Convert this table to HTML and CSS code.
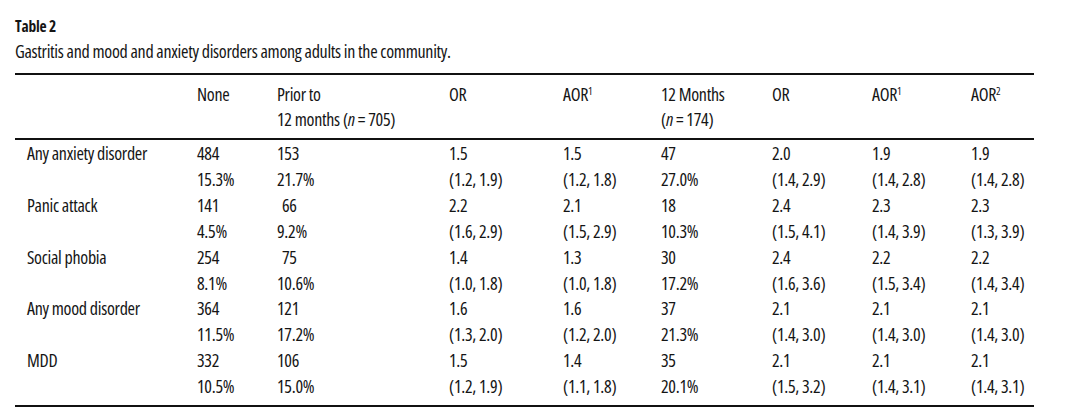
FILE: index.html
```html
<!DOCTYPE html>
<html lang="en">
<head>
<meta charset="utf-8">
<title>Table 2</title>
<link rel="stylesheet" href="styles.css">
</head>
<body>
<div class="page">
  <div class="title">Table 2</div>
  <div class="caption">Gastritis and mood and anxiety disorders among adults in the community.</div>
  <table class="data">
    <colgroup>
      <col class="c1"><col class="c2"><col class="c3"><col class="c4"><col class="c5"><col class="c6"><col class="c7"><col class="c8"><col class="c9">
    </colgroup>
    <thead>
      <tr class="h1">
        <th></th><th>None</th><th>Prior to</th><th>OR</th><th>AOR<sup>1</sup></th><th>12 Months</th><th>OR</th><th>AOR<sup>1</sup></th><th>AOR<sup>2</sup></th>
      </tr>
      <tr class="h2">
        <th></th><th></th><th>12 months (<i>n</i> = 705)</th><th></th><th></th><th>(<i>n</i> = 174)</th><th></th><th></th><th></th>
      </tr>
    </thead>
    <tbody>
      <tr class="first"><td class="lbl">Any anxiety disorder</td><td>484</td><td>153</td><td>1.5</td><td>1.5</td><td>47</td><td>2.0</td><td>1.9</td><td>1.9</td></tr>
      <tr><td class="lbl"></td><td>15.3%</td><td>21.7%</td><td>(1.2, 1.9)</td><td>(1.2, 1.8)</td><td>27.0%</td><td>(1.4, 2.9)</td><td>(1.4, 2.8)</td><td>(1.4, 2.8)</td></tr>
      <tr><td class="lbl">Panic attack</td><td>141</td><td class="ind">66</td><td>2.2</td><td>2.1</td><td>18</td><td>2.4</td><td>2.3</td><td>2.3</td></tr>
      <tr><td class="lbl"></td><td>4.5%</td><td>9.2%</td><td>(1.6, 2.9)</td><td>(1.5, 2.9)</td><td>10.3%</td><td>(1.5, 4.1)</td><td>(1.4, 3.9)</td><td>(1.3, 3.9)</td></tr>
      <tr><td class="lbl">Social phobia</td><td>254</td><td class="ind">75</td><td>1.4</td><td>1.3</td><td>30</td><td>2.4</td><td>2.2</td><td>2.2</td></tr>
      <tr><td class="lbl"></td><td>8.1%</td><td>10.6%</td><td>(1.0, 1.8)</td><td>(1.0, 1.8)</td><td>17.2%</td><td>(1.6, 3.6)</td><td>(1.5, 3.4)</td><td>(1.4, 3.4)</td></tr>
      <tr><td class="lbl">Any mood disorder</td><td>364</td><td>121</td><td>1.6</td><td>1.6</td><td>37</td><td>2.1</td><td>2.1</td><td>2.1</td></tr>
      <tr><td class="lbl"></td><td>11.5%</td><td>17.2%</td><td>(1.3, 2.0)</td><td>(1.2, 2.0)</td><td>21.3%</td><td>(1.4, 3.0)</td><td>(1.4, 3.0)</td><td>(1.4, 3.0)</td></tr>
      <tr><td class="lbl">MDD</td><td>332</td><td>106</td><td>1.5</td><td>1.4</td><td>35</td><td>2.1</td><td>2.1</td><td>2.1</td></tr>
      <tr class="last"><td class="lbl"></td><td>10.5%</td><td>15.0%</td><td>(1.2, 1.9)</td><td>(1.1, 1.8)</td><td>20.1%</td><td>(1.5, 3.2)</td><td>(1.4, 3.1)</td><td>(1.4, 3.1)</td></tr>
    </tbody>
  </table>
</div>
</body>
</html>
```
FILE: styles.css
```css
html, body {
  margin: 0;
  padding: 0;
  background: #ffffff;
}

body {
  font-family: "Open Sans", "DejaVu Sans Condensed", sans-serif;
  font-stretch: 75%;
  font-weight: 430;
  color: #151515;
  font-size: 18px;
  letter-spacing: -0.3px;
}

.page {
  padding: 14px 46px 0 15px;
}

.title {
  font-weight: 700;
  font-size: 15.5px;
  letter-spacing: -0.2px;
  line-height: 24px;
}

.caption {
  line-height: 26px;
  margin-bottom: 9px;
}

.data {
  width: 1019px;
  border-collapse: collapse;
  table-layout: fixed;
  border-top: 2px solid #111;
  border-bottom: 2px solid #111;
}

.c1 { width: 182px; }
.c2 { width: 80px; }
.c3 { width: 172px; }
.c4 { width: 114px; }
.c5 { width: 98px; }
.c6 { width: 111px; }
.c7 { width: 100px; }
.c8 { width: 99px; }
.c9 { width: 63px; }

.data th,
.data td {
  padding: 0;
  text-align: left;
  font-weight: inherit;
  white-space: nowrap;
  line-height: 25.9px;
  vertical-align: top;
}

.data thead th {
  line-height: 25px;
}

.data thead .h1 th {
  padding-top: 7px;
}

.data thead .h2 th {
  padding-bottom: 6px;
  border-bottom: 2px solid #111;
}

.data tbody .first td {
  padding-top: 1px;
}

.data tbody .last td {
  padding-bottom: 5px;
}

.data .lbl {
  padding-left: 12px;
}

.data .ind {
  padding-left: 5px;
}

sup {
  font-size: 0.6em;
  line-height: 0;
  vertical-align: 0.6em;
}
```
